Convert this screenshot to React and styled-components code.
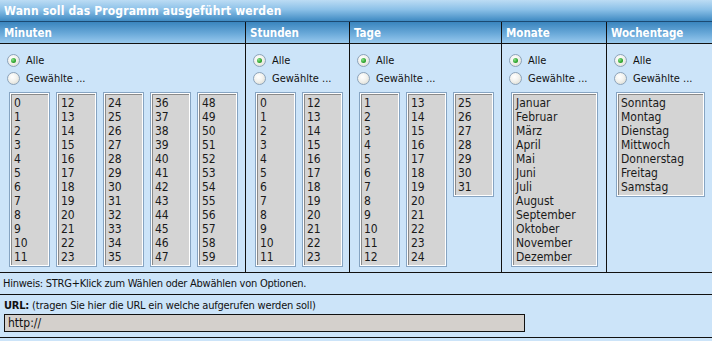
import React from 'react';
import styled, { createGlobalStyle } from 'styled-components';

const GlobalStyle = createGlobalStyle`
  html, body {
    margin: 0;
    padding: 0;
    background: #cce4f9;
  }

  body {
    font-family: 'DejaVu Sans Condensed', 'DejaVu Sans', sans-serif;
    font-size: 11px;
    color: #111;
  }
`;

const StyledPanel = styled.div`
  width: 712px;
  background: #cce4f9;
  border-bottom: 1px solid #111;
`;

const TitleBar = styled.div`
  height: 21px;
  display: flex;
  align-items: center;
  padding-left: 4px;
  background: linear-gradient(#bcdcf4 0%, #8cc1e8 45%, #3f8ac2 100%);
  border-bottom: 1px solid #1c4a72;
  color: #fff;
  font-weight: bold;
  font-size: 12px;
  letter-spacing: 0.15px;
`;

const Columns = styled.div`
  display: grid;
  grid-template-columns: 245px 104px 152px 105px 106px;
`;

const Column = styled.div`
  display: flex;
  flex-direction: column;
  border-left: ${({ first }) => (first ? 'none' : '1px solid #111')};
`;

const ColumnHeader = styled.div`
  height: 21px;
  display: flex;
  align-items: center;
  padding-left: 4px;
  background: linear-gradient(#3a85be 0%, #6aa9d9 55%, #98c9ee 100%);
  border-bottom: 1px solid #111;
  color: #fff;
  font-weight: bold;
  font-size: 11.5px;
`;

const ColumnBody = styled.div`
  height: 228px;
  padding: 7px 0 0 7px;
  box-sizing: border-box;
`;

const RadioRow = styled.label`
  display: flex;
  align-items: center;
  gap: 6px;
  height: 18px;
`;

const Radio = styled.span`
  width: 11px;
  height: 11px;
  border-radius: 50%;
  border: 1px solid #8ca3ba;
  background: radial-gradient(circle at 40% 35%, #ffffff 0%, #f2f2ee 45%, #d6d6cc 100%);
  display: flex;
  align-items: center;
  justify-content: center;

  &::after {
    content: '';
    display: ${({ checked }) => (checked ? 'block' : 'none')};
    width: 5px;
    height: 5px;
    border-radius: 50%;
    background: radial-gradient(circle at 35% 35%, #8be08b 0%, #2ea52e 60%, #1b7d1b 100%);
  }
`;

const Lists = styled.div`
  display: flex;
  align-items: flex-start;
  gap: 6px;
  margin: 5px 0 0 2px;
`;

const ListBox = styled.div`
  width: ${({ w }) => w}px;
  box-sizing: border-box;
  border: 1px solid #86a4c2;
  background: #d4d4d4;
  box-shadow: inset 0 0 0 1px #fff, inset 2px 2px 0 #8a8a8a;
  padding: 3px 0 2px 4px;
  font-size: 12px;
  line-height: 14px;
  color: #1a1a1a;
`;

const Footer = styled.div`
  border-top: 1px solid #111;
  height: 21px;
  display: flex;
  align-items: center;
  padding-left: 3px;
  letter-spacing: -0.25px;
`;

const UrlSection = styled.div`
  border-top: 1px solid #111;
  padding: 4px 0 5px 4px;
  display: flex;
  flex-direction: column;
  gap: 1px;
`;

const UrlLabel = styled.div`
  line-height: 14px;
  letter-spacing: -0.2px;

  b {
    font-weight: bold;
  }
`;

const UrlInput = styled.div`
  width: 521px;
  height: 18px;
  box-sizing: border-box;
  border: 1px solid #111;
  background: #d4d0cc;
  padding-left: 3px;
  font-size: 12px;
  line-height: 16px;
`;

const range = (from, to) => Array.from({ length: to - from + 1 }, (_, i) => from + i);
const chunk = (arr, size) => {
  const out = [];
  for (let i = 0; i < arr.length; i += size) out.push(arr.slice(i, i + size));
  return out;
};

const columns = [
  { title: 'Minuten', width: 41, lists: chunk(range(0, 59), 12) },
  { title: 'Stunden', width: 41, lists: chunk(range(0, 23), 12) },
  { title: 'Tage', width: 41, lists: chunk(range(1, 31), 12) },
  {
    title: 'Monate',
    width: 87,
    lists: [['Januar', 'Februar', 'März', 'April', 'Mai', 'Juni', 'Juli', 'August', 'September', 'Oktober', 'November', 'Dezember']],
  },
  {
    title: 'Wochentage',
    width: 89,
    lists: [['Sonntag', 'Montag', 'Dienstag', 'Mittwoch', 'Donnerstag', 'Freitag', 'Samstag']],
  },
];

const App = () => (
  <>
    <GlobalStyle />
    <StyledPanel>
      <TitleBar>Wann soll das Programm ausgeführt werden</TitleBar>

      <Columns>
        {columns.map((col, i) => (
          <Column key={col.title} first={i === 0}>
            <ColumnHeader>{col.title}</ColumnHeader>
            <ColumnBody>
              <RadioRow>
                <Radio checked />
                Alle
              </RadioRow>
              <RadioRow>
                <Radio />
                Gewählte ...
              </RadioRow>
              <Lists>
                {col.lists.map((items, j) => (
                  <ListBox key={j} w={col.width}>
                    {items.map(item => (
                      <div key={item}>{item}</div>
                    ))}
                  </ListBox>
                ))}
              </Lists>
            </ColumnBody>
          </Column>
        ))}
      </Columns>

      <Footer>Hinweis: STRG+Klick zum Wählen oder Abwählen von Optionen.</Footer>

      <UrlSection>
        <UrlLabel>
          <b>URL:</b> (tragen Sie hier die URL ein welche aufgerufen werden soll)
        </UrlLabel>
        <UrlInput>http://</UrlInput>
      </UrlSection>
    </StyledPanel>
  </>
);

export default App;
